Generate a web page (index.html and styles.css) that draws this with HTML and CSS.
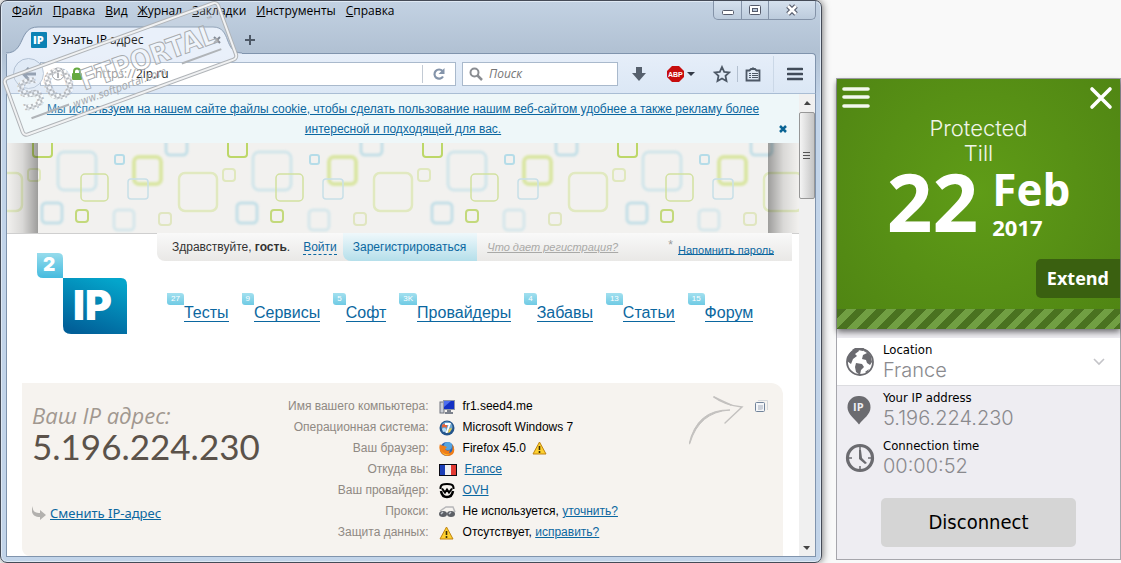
FILE: index.html
```html
<!DOCTYPE html>
<html lang="ru">
<head>
    <meta charset="UTF-8">
    <title>Узнать IP адрес</title>
    <link rel="stylesheet" href="styles.css">
</head>
<body>

<div class="desktop">

    <section class="browser">
        <div class="titlebar">
            <nav class="menu">
                <button><u>Ф</u>айл</button>
                <button><u>П</u>равка</button>
                <button><u>В</u>ид</button>
                <button><u>Ж</u>урнал</button>
                <button><u>З</u>акладки</button>
                <button><u>И</u>нструменты</button>
                <button><u>С</u>правка</button>
            </nav>
            <div class="caption">
                <button aria-label="Свернуть"><svg width="14" height="14"><rect x="1.500" y="7.500" width="11" height="4" rx="1" fill="#fff" stroke="#555b6b"/></svg></button>
                <button aria-label="Развернуть"><svg width="14" height="14"><rect x="1.500" y="2.500" width="11" height="9" rx="1" fill="#fff" stroke="#555b6b"/><rect x="4.500" y="5.500" width="5" height="3" fill="#b9c8da" stroke="#555b6b"/></svg></button>
                <button class="wide" aria-label="Закрыть"><svg width="14" height="14"><path d="M3 3l8 8M11 3l-8 8" stroke="#555b6b" stroke-width="5"/><path d="M3 3l8 8M11 3l-8 8" stroke="#fff" stroke-width="2.600"/></svg></button>
            </div>
        </div>

        <div class="tabs">
            <div class="tab">
                <svg class="tab-shape" width="236" height="28" viewBox="0 0 236 28">
                    <path d="M0 27C20 27 12 1 32 1H207C226 1 217 27 236 27V28H0z" fill="#e6eef9"/>
                    <path d="M0 27C20 27 12 1 32 1H207C226 1 217 27 236 27" fill="none" stroke="#8094ad"/>
                </svg>
                <svg class="favicon" width="16" height="16">
                    <rect width="16" height="16" rx="1" fill="#0b82b4"/>
                    <text x="2" y="12" font-family="Open Sans, sans-serif" font-size="11" font-weight="800" fill="#fff">IP</text>
                </svg>
                <span class="tab-title">Узнать IP адрес</span>
                <button class="tab-close" aria-label="Закрыть вкладку"><svg width="10" height="10"><path d="M2 2l6 6M8 2l-6 6" stroke="#6d7785" stroke-width="2"/></svg></button>
            </div>
            <button class="new-tab" aria-label="Новая вкладка"><svg width="12" height="12"><path d="M6 1v10M1 6h10" stroke="#4d5866" stroke-width="2"/></svg></button>
        </div>

        <div class="toolbar">
            <button class="back" aria-label="Назад"><svg width="16" height="16"><path d="M8 2L2.500 8 8 14M3 8h12" fill="none" stroke="#8392a6" stroke-width="3"/></svg></button>
            <div class="address">
                <svg width="14" height="14"><circle cx="7" cy="7" r="6" fill="none" stroke="#8b8f95"/><path d="M7 6v5M7 3v2" stroke="#8b8f95" stroke-width="1.600"/></svg>
                <svg width="12" height="14"><path d="M3 7V4.500a3 3 0 0 1 6 0V7" fill="none" stroke="#4b9a1e" stroke-width="2"/><rect x="1" y="6" width="10" height="7" rx="1" fill="#4b9a1e"/></svg>
                <label for="url">https://</label>
                <input type="text" id="url" value="2ip.ru">
                <button class="reload" aria-label="Обновить"><svg width="14" height="14"><path d="M11 9.500A4.600 4.600 0 1 1 10.500 4" fill="none" stroke="#8494aa" stroke-width="2.200"/><path d="M12.500 1v6h-6z" fill="#8494aa"/></svg></button>
            </div>
            <div class="search">
                <svg width="14" height="14"><circle cx="5.500" cy="5.500" r="4" fill="none" stroke="#8a8d92" stroke-width="2"/><path d="M8.500 8.500L13 13" stroke="#8a8d92" stroke-width="2.500"/></svg>
                <input type="text" aria-label="Поиск" placeholder="Поиск">
            </div>
            <div class="tools">
                <button aria-label="Загрузки"><svg width="16" height="16"><path d="M5 1h6v6h4l-7 8-7-8h4z" fill="#56606d"/></svg></button>
                <button class="abp" aria-label="Adblock Plus"><svg width="28" height="18">
                    <path d="M5 1h7l5 5v6l-5 5H5l-5-5V6z" fill="#c70d0d"/>
                    <text x="1" y="12" font-family="Liberation Sans, sans-serif" font-size="7" font-weight="700" fill="#fff">ABP</text>
                    <path d="M20 7h8l-4 4z" fill="#333a47"/></svg></button>
                <button aria-label="В закладки"><svg width="18" height="18"><path d="M9 2l2.200 4.800 5 .6-3.700 3.500 1 5.100L9 13.500 4.500 16l1-5.100L1.800 7.400l5-.6z" fill="none" stroke="#4d5866" stroke-width="1.800"/></svg></button>
                <i class="sep"></i>
                <button aria-label="Показать закладки"><svg width="16" height="16"><path d="M1.500 4.500h3L6 3h4l1.500 1.500h3v10h-13z" fill="none" stroke="#4d5866" stroke-width="1.800"/><path d="M8 1v3M4 7.500h2M7 7.500h6M4 9.500h2M7 9.500h6M4 11.500h2M7 11.500h6" stroke="#4d5866"/></svg></button>
                <i class="sep tall"></i>
                <button aria-label="Меню"><svg width="16" height="14"><path d="M1 2h14M1 7h14M1 12h14" stroke="#424c59" stroke-width="2.600" stroke-linecap="round"/></svg></button>
            </div>
        </div>

        <div class="viewport">
            <main class="page">
                <div class="notice">
                    <a href="#">Мы используем на нашем сайте файлы cookie, чтобы сделать пользование нашим веб-сайтом удобнее а также рекламу более интересной и подходящей для вас.</a>
                    <button aria-label="Закрыть"><svg width="8" height="8"><path d="M1 1l6 6M7 1l-6 6" stroke="#0b6494" stroke-width="2.500"/></svg></button>
                </div>

                <div class="banner">
                    <svg width="100%" height="90">
                        <defs>
                            <filter id="soft"><feGaussianBlur stdDeviation="1"/></filter>
                            <pattern id="squares" x="47" y="0" width="195" height="90" patternUnits="userSpaceOnUse">
                                <g fill="none">
                                    <g filter="url(#soft)" stroke-width="3">
                                        <rect x="4" y="9" width="38" height="38" rx="6" stroke="#d0e5ea"/>
                                        <rect x="80" y="14" width="27" height="27" rx="5" stroke="#dae6a4" stroke-width="4"/>
                                        <rect x="112" y="-9" width="21" height="21" rx="4" stroke="#c3dfe7"/>
                                        <rect x="183" y="60" width="20" height="20" rx="4" stroke="#c3dfe7"/>
                                        <rect x="-12" y="60" width="20" height="20" rx="4" stroke="#c3dfe7"/>
                                        <rect x="60" y="67" width="20" height="20" rx="4" stroke="#d6e7eb"/>
                                    </g>
                                    <rect x="27" y="31" width="27" height="27" rx="4" stroke="#d2e1a0" stroke-width="1.500"/>
                                    <rect x="61" y="12" width="9" height="9" rx="2" stroke="#b5dce8" stroke-width="2"/>
                                    <rect x="74" y="36" width="20" height="20" rx="3" stroke="#c8dfe8" stroke-width="1.500"/>
                                    <rect x="125" y="30" width="38" height="38" rx="6" stroke="#e1e9c0" stroke-width="2.500"/>
                                    <rect x="169" y="26" width="12" height="12" rx="3" stroke="#e0e8bd" stroke-width="2"/>
                                    <rect x="174" y="-7" width="19" height="21" rx="3" stroke="#bdd768" stroke-width="2"/>
                                    <rect x="22" y="67" width="12" height="12" rx="3" stroke="#c3d97b" stroke-width="2"/>
                                    <rect x="105" y="70" width="12" height="12" rx="3" stroke="#e0e6c0" stroke-width="2"/>
                                </g>
                            </pattern>
                        </defs>
                        <rect width="100%" height="90" fill="#f2f1ef"/>
                        <rect width="100%" height="90" fill="url(#squares)"/>
                    </svg>
                    <i class="shade left"></i>
                    <i class="shade right"></i>
                </div>

                <header class="site-header">
                    <a class="logo" href="#" aria-label="2ip">
                        <svg width="90" height="81">
                            <defs>
                                <linearGradient id="lg1" x1="0" y1="0" x2="0" y2="1"><stop offset="0" stop-color="#97dcec"/><stop offset="1" stop-color="#45bbdf"/></linearGradient>
                                <linearGradient id="lg2" x1=".7" y1="0" x2=".3" y2="1"><stop offset="0" stop-color="#04a5cb"/><stop offset="1" stop-color="#015f98"/></linearGradient>
                            </defs>
                            <path d="M0 0h21q5 0 5 5v20H6q-6 0-6-6z" fill="url(#lg1)"/>
                            <path d="M26 25h58q6 0 6 7v49H34q-8 0-8-8z" fill="url(#lg2)"/>
                            <text x="6" y="18" font-family="Inter, sans-serif" font-size="19" font-weight="900" fill="#fff">2</text>
                            <text x="36" y="67" font-family="Inter, sans-serif" font-size="41" font-weight="900" fill="#fff">IP</text>
                        </svg>
                    </a>
                    <div class="header-main">
                        <div class="account">
                            <span class="hello">Здравствуйте, <b>гость</b>.</span>
                            <a class="login" href="#">Войти</a>
                            <a class="register" href="#">Зарегистрироваться</a>
                            <a class="why" href="#">Что дает регистрация?</a>
                            <span class="remind"><sup>*</sup><a href="#">Напомнить пароль</a></span>
                        </div>
                        <nav class="sections">
                            <a href="#"><span>27</span><b>Тесты</b></a>
                            <a href="#"><span>9</span><b>Сервисы</b></a>
                            <a href="#"><span>5</span><b>Софт</b></a>
                            <a href="#"><span>3K</span><b>Провайдеры</b></a>
                            <a href="#"><span>4</span><b>Забавы</b></a>
                            <a href="#"><span>13</span><b>Статьи</b></a>
                            <a href="#"><span>15</span><b>Форум</b></a>
                        </nav>
                    </div>
                </header>

                <section class="info">
                    <div class="ip">
                        <h2>Ваш IP адрес:</h2>
                        <p class="ip-number">5.196.224.230</p>
                        <p class="change">
                            <svg width="15" height="14"><path d="M1 0C0 6 4 7 8 7V4l6 5-6 5v-3C1 11-2 6 1 0z" fill="#b3b1ae"/></svg>
                            <a href="#">Сменить IP-адрес</a>
                        </p>
                    </div>
                    <table>
                        <tr>
                            <th>Имя вашего компьютера:</th>
                            <td class="icon"><svg width="18" height="16"><rect x="1" y="3" width="4" height="11" fill="#c9cdd6" stroke="#70757f"/><rect x="4.500" y="1.500" width="11" height="9" fill="#1230c4" stroke="#8f96a8"/><path d="M5 2h7l-7 6z" fill="#4d6ff0"/><path d="M8 11h4v2h2v2H6v-2h2z" fill="#7c818c"/></svg></td>
                            <td>fr1.seed4.me</td>
                        </tr>
                        <tr>
                            <th>Операционная система:</th>
                            <td class="icon"><svg width="18" height="16"><circle cx="8" cy="8" r="7.500" fill="#24558c"/><circle cx="8" cy="7" r="5.500" fill="#6ea4cc"/><path d="M3 5q2-2 5 0v3q-3-2-5 0z" fill="#e5633a"/><path d="M3 9q2-2 4 0v3q-2-1-3 0z" fill="#b8dcf5"/><path d="M6 3h6L8.500 13H6.500l3-8H6z" fill="#fff"/><path d="M10 9l3-1-2 4-2 1z" fill="#f1ce3a"/></svg></td>
                            <td>Microsoft Windows 7</td>
                        </tr>
                        <tr>
                            <th>Ваш браузер:</th>
                            <td class="icon"><svg width="18" height="16"><circle cx="8" cy="8" r="7" fill="#2b65b8"/><circle cx="9" cy="5" r="4" fill="#55a5e0"/><path d="M1 3Q2 5 4 4.500L8 6 6 8q2 3 5 1l-1 3q5-1 3-9 4 5 1 10Q9 17 3 13-1 9 1 3z" fill="#f07d17"/><path d="M2 9q4 6 9 4-5 4-9-4z" fill="#ffc93c"/></svg></td>
                            <td>Firefox 45.0 <svg class="warn" width="15" height="14"><path d="M7.500 1L14 13H1z" fill="#fdd02e" stroke="#c08310" stroke-linejoin="round"/><path d="M7.500 5v4M7.500 10v2" stroke="#3a2c05" stroke-width="1.600"/></svg></td>
                        </tr>
                        <tr>
                            <th>Откуда вы:</th>
                            <td class="icon"><svg width="18" height="12"><rect width="18" height="12" fill="#0a0a14"/><rect x="1" y="1" width="5" height="10" fill="#1d3fb8"/><rect x="6" y="1" width="6" height="10" fill="#f1f1f4"/><rect x="12" y="1" width="5" height="10" fill="#e23a33"/></svg></td>
                            <td class="country"><a href="#">France</a></td>
                        </tr>
                        <tr>
                            <th>Ваш провайдер:</th>
                            <td class="icon"><svg width="18" height="16" fill="none" stroke="#000"><path d="M1.500 6C1 1 5 1 8 1s7 0 6.500 5" stroke-width="2"/><path d="M3 5.500l3 4 2-3 2 3 3-4" stroke-width="2"/><path d="M2 8q1 6 6 6t6-6" stroke-width="2.500"/></svg></td>
                            <td><a href="#">OVH</a></td>
                        </tr>
                        <tr>
                            <th>Прокси:</th>
                            <td class="icon"><svg width="18" height="12"><path d="M1 5l6-4h7l2 5" fill="none" stroke="#b7b7b9" stroke-width="1.500"/><ellipse cx="4" cy="8" rx="4" ry="3" fill="#5d6066"/><ellipse cx="12" cy="8" rx="4" ry="3" fill="#5d6066"/><path d="M2 8l2-2M10 8l2-2" stroke="#c4c8ce" stroke-width="1.500"/></svg></td>
                            <td>Не используется, <a href="#">уточнить?</a></td>
                        </tr>
                        <tr>
                            <th>Защита данных:</th>
                            <td class="icon"><svg width="18" height="14"><path d="M7.500 1L14 13H1z" fill="#fdd02e" stroke="#c08310" stroke-linejoin="round"/><path d="M7.500 5v4M7.500 10v2" stroke="#3a2c05" stroke-width="1.600"/></svg></td>
                            <td>Отсутствует, <a href="#">исправить?</a></td>
                        </tr>
                    </table>
                    <div class="copy">
                        <svg width="55" height="50" fill="none" stroke="#c3c1bf" stroke-linecap="round"><path d="M0 48Q8 13 41 14 10 16 1 47z" fill="#c3c1bf"/><path d="M25 1q10 8 28 10L36 27" stroke-width="1.400"/><path d="M25 1q8 4 17 8" stroke-width="1.400"/></svg>
                        <button aria-label="Скопировать"><svg width="13" height="13"><path d="M3 .500h9.500V10" fill="none" stroke="#d5d8dc"/><rect x=".500" y="2.500" width="9" height="9" rx="1" fill="#f4f6f9" stroke="#71839a"/><path d="M3 5h5v4l-2 1H3z" fill="#ccd1da"/></svg></button>
                    </div>
                </section>
            </main>

            <div class="scrollbar">
                <svg width="16" height="18"><path d="M5 11l3-4 4 4z" fill="#444"/></svg>
                <div class="thumb"><svg width="8" height="9"><path d="M0 1.500h7M0 4.500h7M0 7.500h7" stroke="#555"/></svg></div>
                <svg class="down" width="16" height="18"><path d="M4 8h7l-3 4z" fill="#444"/></svg>
            </div>
        </div>
    </section>

    <section class="vpn">
        <div class="hero">
            <div class="hero-top">
                <button aria-label="Menu"><svg width="30" height="24"><path d="M3 3h24M3 11h24M3 20h24" stroke="#f4f8ee" stroke-width="3.600" stroke-linecap="round"/></svg></button>
                <button aria-label="Close"><svg width="24" height="24"><path d="M3 3l18 18M21 3L3 21" stroke="#fff" stroke-width="3.600" stroke-linecap="round"/></svg></button>
            </div>
            <p class="protected">Protected<br>Till</p>
            <div class="date">
                <span class="day">22</span>
                <div>
                    <div class="month">Feb</div>
                    <div class="year">2017</div>
                </div>
            </div>
            <button class="extend">Extend</button>
            <div class="stripes"></div>
        </div>
        <div class="row location">
            <svg width="30" height="30"><circle cx="15" cy="15" r="13" fill="#fff" stroke="#6b6b70" stroke-width="1.800"/><path d="M3 9Q6 3 13 2l1 2-4 3 2 2-4 3-2 5-4-3zM17 3q6 1 9 6l1 6-2 3-3-2-1-3-4-1 1-4 4-2zM11 16l6 1 2 3-3 3-1 5-4-3-1-5zM7 3l3-2h9l-1 3-5-1zM20 25l4-3-2 4z" fill="#6b6b70"/></svg>
            <div><b>Location</b><span>France</span></div>
            <svg class="chevron" width="12" height="8"><path d="M1 1l5 5 5-5" fill="none" stroke="#c4c4c8" stroke-width="1.600"/></svg>
        </div>
        <div class="row">
            <svg width="30" height="30"><path d="M14 1a11 11 0 0 1 11.500 11.500c0 7-7 11-11.500 17C9.500 23.500 2.500 19 2.500 12.500A11 11 0 0 1 14 1z" fill="#6b6b70"/><text x="8" y="16" font-family="Open Sans, sans-serif" font-size="11" font-weight="700" fill="#eeedf2">IP</text></svg>
            <div><b>Your IP address</b><span>5.196.224.230</span></div>
        </div>
        <div class="row">
            <svg width="30" height="30"><circle cx="15" cy="15" r="12.500" fill="none" stroke="#6b6b70" stroke-width="3.200"/><path d="M15 4v3M15 23v3M4 15h3M23 15h3" stroke="#6b6b70" stroke-width="1.500"/><path d="M14 7h2l1 8 5 5-2 1-6-5z" fill="#6b6b70"/></svg>
            <div><b>Connection time</b><span>00:00:52</span></div>
        </div>
        <button class="disconnect">Disconnect</button>
    </section>

    <svg class="stamp" width="244" height="142">
        <defs>
            <pattern id="cells" width="5" height="5" patternUnits="userSpaceOnUse">
                <rect x=".500" y=".500" width="4" height="4" rx="1" fill="#fff" fill-opacity=".5" stroke="#a2a6ab" stroke-width=".800"/>
            </pattern>
        </defs>
        <g transform="rotate(-20 120 69)" font-family="DejaVu Sans Condensed, sans-serif" font-weight="700">
            <rect x="7" y="39" width="227" height="60" rx="4" fill="#fff" fill-opacity=".15" stroke="#b0b4b8" stroke-width="4"/>
            <rect x="7" y="39" width="227" height="60" rx="4" fill="none" stroke="#f1f2f3" stroke-width="2"/>
            <text x="14" y="77" font-size="42" fill="url(#cells)">SO</text>
            <text x="79" y="77" font-size="28" fill="#fff" fill-opacity=".35" stroke="#a6aaae" stroke-width=".900">FTPORTAL</text>
            <text x="218" y="56" font-size="8" fill="#a6aaae">™</text>
            <path d="M20 85h40M180 85h42" stroke="#b0b4b8" stroke-width="2"/>
            <text x="64" y="90" font-size="11" font-style="italic" font-weight="400" fill="#a6aaae">www.softportal.com</text>
        </g>
    </svg>
</div>

</body>
</html>
```

FILE: styles.css
```css
* {
    box-sizing: border-box;
}
body {
    margin: 0;
    background: #f9f9f9;
    font-family: "Liberation Sans", Arial, sans-serif;
    font-size: 12px;
    color: #000;
}
button {
    margin: 0;
    padding: 0;
    border: none;
    background: none;
    font: inherit;
    color: inherit;
    cursor: pointer;
}
svg {
    display: block;
    flex: none;
}
a {
    color: #0b67a0;
}
h2, p {
    margin: 0;
}

.desktop {
    position: relative;
    display: flex;
    gap: 14px;
    min-height: 100vh;
}

/* browser window */
.browser {
    flex: 1;
    display: flex;
    flex-direction: column;
    padding: 0 5px 5px;
    border: 1px solid #454b57;
    border-radius: 7px;
    background: linear-gradient(#c3d2e3, #b1c1d3 50px, #c2d4e9 100px);
    box-shadow: inset 0 0 0 1px #dfe9f4, 1px 0 7px rgba(0, 0, 0, .5);
}
.titlebar {
    display: flex;
    justify-content: space-between;
    align-items: flex-start;
    height: 25px;
}
.menu {
    display: flex;
    gap: 10px;
    padding: 2px 6px;
    font-family: "Open Sans", sans-serif;
    font-size: 12px;
    line-height: 16px;
}
.caption {
    display: flex;
    height: 19px;
    border: 1px solid #8493a8;
    border-top: none;
    border-radius: 0 0 5px 5px;
    background: linear-gradient(#d5e1ee, #bccbdc);
}
.caption button {
    display: flex;
    align-items: center;
    justify-content: center;
    width: 27px;
}
.caption button + button {
    border-left: 1px solid #8493a8;
}
.caption .wide {
    width: 47px;
}

.tabs {
    display: flex;
    align-items: center;
    gap: 6px;
    height: 27px;
}
.tab {
    position: relative;
    z-index: 1;
    display: flex;
    align-items: center;
    gap: 6px;
    width: 232px;
    height: 28px;
    padding: 0 16px 0 25px;
}
.tab-shape {
    position: absolute;
    left: 0;
    top: 0;
    z-index: -1;
}
.tab-title {
    flex: 1;
    font-family: "Open Sans", sans-serif;
}

.toolbar {
    display: flex;
    align-items: center;
    height: 41px;
    padding: 0 12px 0 6px;
    border: 1px solid #8094ad;
    border-bottom-color: #a9bdd4;
    border-radius: 0 4px 0 0;
    background: linear-gradient(#e6eef9, #dbe7f5);
}
.back {
    position: relative;
    z-index: 1;
    display: flex;
    align-items: center;
    justify-content: center;
    width: 31px;
    height: 31px;
    border: 1px solid #b2c1d4;
    border-radius: 50%;
    background: #e0eaf6;
}
.address, .search {
    display: flex;
    align-items: center;
    height: 24px;
    border: 1px solid #a9b9cc;
    background: #fff;
    font-family: "Open Sans", sans-serif;
}
.address {
    flex: 1;
    gap: 6px;
    margin-left: -4px;
    padding-left: 10px;
}
.address label {
    margin-left: 6px;
    color: #8b8b8b;
}
.address input {
    flex: 1;
    min-width: 0;
    margin-left: -6px;
}
.address input, .search input {
    padding: 0;
    border: none;
    outline: none;
    background: none;
    font: inherit;
}
.reload {
    height: 18px;
    padding: 0 9px;
    border-left: 1px solid #c2cad4;
}
.search {
    gap: 6px;
    width: 156px;
    margin: 0 13px 0 6px;
    padding-left: 6px;
}
.search input {
    flex: 1;
    min-width: 0;
}
.search input::placeholder {
    color: #767676;
    font-style: italic;
}
.tools {
    display: flex;
    align-items: center;
}
.tools .abp {
    margin: 0 18px 0 20px;
}
.sep {
    width: 1px;
    height: 16px;
    margin: 0 7px 0 6px;
    background: #b3c0d0;
}
.sep.tall {
    height: 36px;
    margin: 0 13px 0 12px;
    background: #cbd8e7;
}

.viewport {
    flex: 1;
    display: flex;
    border: 1px solid #8094ad;
    border-top: none;
    background: #fff;
}
.page {
    flex: 1;
    display: flex;
    flex-direction: column;
}
.scrollbar {
    display: flex;
    flex-direction: column;
    width: 16px;
    background: #f0f0f0;
}
.scrollbar .thumb {
    display: flex;
    align-items: center;
    justify-content: center;
    height: 87px;
    border: 1px solid #979797;
    border-radius: 2px;
    background: linear-gradient(90deg, #f4f4f4, #dcdcdc 50%, #c4c4c4);
}
.scrollbar .down {
    margin-top: auto;
}

/* site */
.notice {
    position: relative;
    padding: 5px 32px 4px;
    background: #eef7f9;
    line-height: 20px;
    text-align: center;
}
.notice button {
    position: absolute;
    right: 12px;
    bottom: 10px;
}
.banner {
    position: relative;
    height: 90px;
    overflow: hidden;
}
.shade {
    position: absolute;
    top: 0;
    bottom: 0;
    width: 31px;
}
.shade.left {
    left: 0;
    background: linear-gradient(90deg, rgba(0, 0, 0, 0), rgba(0, 0, 0, .1) 50%, rgba(0, 0, 0, .35));
}
.shade.right {
    right: 0;
    background: linear-gradient(270deg, rgba(0, 0, 0, 0), rgba(0, 0, 0, .1) 50%, rgba(0, 0, 0, .35));
}

.site-header {
    display: flex;
    border-top: 1px solid #cfcfcf;
}
.logo {
    padding: 19px 30px 0;
}
.header-main {
    flex: 1;
    margin-top: -1px;
}
.account {
    display: flex;
    align-items: center;
    height: 28px;
    margin-right: 7px;
    padding: 0 18px 0 15px;
    border-radius: 0 0 0 8px;
    background: linear-gradient(#f9f9f9, #e9e8e6);
    color: #333;
}
.login {
    margin: 0 6px 0 13px;
    border-bottom: 1px dashed #0b67a0;
    text-decoration: none;
}
.register {
    padding: 0 11px 0 10px;
    border-radius: 0 0 0 8px;
    background: linear-gradient(#eff8fb, #b5dfea);
    line-height: 28px;
    text-decoration: none;
}
.why {
    margin-left: 10px;
    color: #a9a9a7;
    font-size: 11px;
    font-style: italic;
}
.remind {
    margin-left: auto;
    font-size: 11px;
}
.remind sup {
    margin-right: 5px;
    color: #999;
    font-size: 12px;
    line-height: 1;
}
.sections {
    display: flex;
    gap: 13px;
    padding: 32px 10px 0;
}
.sections a {
    display: flex;
    align-items: flex-start;
    text-decoration: none;
}
.sections span {
    padding: 0 4px;
    border-radius: 0 3px 0 3px;
    background: linear-gradient(#a3e0ef, #6fcae4);
    color: #fff;
    font-size: 8px;
    line-height: 12px;
}
.sections b {
    margin-top: 11px;
    border-bottom: 1px solid #0b67a0;
    font-size: 16px;
    font-weight: 400;
    line-height: 17px;
}

.info {
    flex: 1;
    display: flex;
    align-items: flex-start;
    margin: 49px 16px 0 15px;
    padding: 13px 15px 0 10px;
    border-radius: 0 12px 0 8px;
    background: #f6f3ef;
}
.ip {
    width: 256px;
    padding-top: 3px;
    color: #5b524a;
}
.ip h2 {
    color: #a19890;
    font: italic 22px/32px "Open Sans", sans-serif;
}
.ip-number {
    font: 35px/30px Lato, sans-serif;
}
.change {
    display: flex;
    align-items: center;
    gap: 3px;
    margin-top: 42px;
    font: 13px/20px "Noto Sans", sans-serif;
}
.info table {
    border-spacing: 0;
    line-height: 21px;
}
.info th, .info td {
    padding: 0;
    text-align: left;
}
.info th {
    color: #8f8983;
    font-weight: 400;
    text-align: right;
}
.info td.icon {
    padding: 0 6px 0 10px;
}
.info td.country {
    padding-left: 2px;
}
.warn {
    display: inline-block;
    margin-left: 3px;
    vertical-align: -3px;
}
.copy {
    display: flex;
    gap: 11px;
    align-items: flex-start;
    margin-left: auto;
}
.copy button {
    margin-top: 4px;
}

/* vpn client */
.vpn {
    width: 285px;
    align-self: flex-start;
    margin-top: 78px;
    padding-bottom: 12px;
    border: 1px solid #a6a6ac;
    background: #eeedf2;
    text-align: center;
}
.hero {
    position: relative;
    display: flex;
    flex-direction: column;
    margin-bottom: 9px;
    background: radial-gradient(circle at 50% 45%, #5f9c17, #4f8413);
    box-shadow: 0 3px 6px rgba(0, 0, 0, .55);
    color: #fff;
}
.hero-top {
    display: flex;
    justify-content: space-between;
    padding: 7px 7px 6px 4px;
}
.protected {
    font: 300 22px/25px Inter, sans-serif;
    color: #f0f5e8;
}
.date {
    display: flex;
    justify-content: center;
    gap: 14px;
    font-family: "Open Sans", sans-serif;
    font-weight: 700;
    text-align: left;
}
.day {
    font-size: 80px;
    line-height: 70px;
}
.month {
    font-size: 44px;
    line-height: 46px;
}
.year {
    font-size: 22px;
    line-height: 30px;
}
.extend {
    align-self: flex-end;
    margin: 17px 0 11px;
    padding: 0 11px;
    border-radius: 5px 0 0 5px;
    background: #3a6010;
    font: 700 18px/39px "Open Sans", sans-serif;
}
.stripes {
    height: 20px;
    background: repeating-linear-gradient(135deg, #4a7220 0 7px, #719f43 7px 14px);
}
.row {
    display: flex;
    align-items: center;
    gap: 8px;
    height: 48px;
    padding: 0 15px 0 8px;
    text-align: left;
}
.row.location {
    position: relative;
    border-bottom: 1px solid #dcdce0;
    background: #fff;
}
.row b {
    display: block;
    font: 13px/16px "DejaVu Sans Condensed", sans-serif;
}
.row span {
    display: block;
    color: #8a8a8e;
    font: 300 20px/24px Inter, sans-serif;
}
.chevron {
    margin-left: auto;
}
.disconnect {
    width: 69%;
    margin-top: 16px;
    border-radius: 5px;
    background: #d5d5d5;
    font: 20px/49px "DejaVu Sans Condensed", sans-serif;
}

/* stamp over the top left corner */
.stamp {
    position: absolute;
    left: 0;
    top: 0;
    z-index: 5;
    pointer-events: none;
}
```
